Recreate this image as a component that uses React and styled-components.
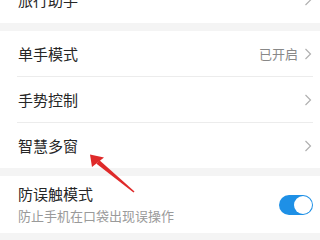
import React from 'react';
import styled, { createGlobalStyle } from 'styled-components';

const Global = createGlobalStyle`
  html, body {
    margin: 0;
    padding: 0;
    background: #f4f4f4;
    overflow: hidden;
  }
  body {
    font-family: "Noto Sans CJK SC", "Noto Sans", sans-serif;
  }
`;

const Page = styled.div`
  position: relative;
  width: 320px;
  height: 240px;
  overflow: hidden;
  background: #f4f4f4;
`;

const List = styled.div`
  margin-top: -23px;
  display: flex;
  flex-direction: column;
  gap: 8px;
`;

const Group = styled.div`
  background: #fff;
  display: flex;
  flex-direction: column;
`;

const Row = styled.div`
  height: ${(p) => p.h || 45}px;
  display: flex;
  align-items: center;
  padding: 0 8px 0 18px;
  box-sizing: border-box;
`;

const Divider = styled.div`
  height: 1px;
  background: #ececec;
  margin: 0 7px 0 17px;
`;

const Texts = styled.div`
  flex: 1;
  display: flex;
  flex-direction: column;
  gap: 5px;
`;

const Title = styled.div`
  font-size: 15px;
  line-height: 18px;
  color: #262626;
`;

const Sub = styled.div`
  font-size: 13px;
  line-height: 16px;
  color: #9a9a9a;
`;

const Value = styled.span`
  font-size: 13px;
  color: #888;
  margin-right: 6px;
`;

const Toggle = styled.div`
  width: 34px;
  height: 20px;
  border-radius: 10px;
  background: #1e90e6;
  display: flex;
  align-items: center;
  justify-content: flex-end;
  padding: 0 1px;
  box-sizing: border-box;
  margin-right: -1px;
`;

const Knob = styled.div`
  width: 18px;
  height: 18px;
  border-radius: 50%;
  background: #fff;
`;

const Overlay = styled.svg`
  position: absolute;
  left: 0;
  top: 0;
  pointer-events: none;
`;

const Chevron = () => (
  <svg width="8" height="12" viewBox="0 0 8 12">
    <path d="M1.5 1 L6.5 6 L1.5 11" fill="none" stroke="#b0b0b0" strokeWidth="1.2" />
  </svg>
);

const Item = ({ title, value }) => (
  <Row>
    <Texts>
      <Title>{title}</Title>
    </Texts>
    {value && <Value>{value}</Value>}
    <Chevron />
  </Row>
);

export default function App() {
  return (
    <Page>
      <Global />
      <List>
        <Group>
          <Row h={46}>
            <Texts>
              <Title>旅行助手</Title>
            </Texts>
            <Chevron />
          </Row>
        </Group>
        <Group>
          <Item title="单手模式" value="已开启" />
          <Divider />
          <Item title="手势控制" />
          <Divider />
          <Item title="智慧多窗" />
        </Group>
        <Group>
          <Row h={57}>
            <Texts>
              <Title>防误触模式</Title>
              <Sub>防止手机在口袋出现误操作</Sub>
            </Texts>
            <Toggle>
              <Knob />
            </Toggle>
          </Row>
        </Group>
      </List>
      <Overlay width="320" height="240" viewBox="0 0 320 240">
        <polygon points="96.5,163.8 99.5,160.2 134.5,191.4 133.5,192.6" fill="#df2a2a" />
        <polygon points="90,154.5 104,157.5 92,167" fill="#df2a2a" />
      </Overlay>
    </Page>
  );
}
